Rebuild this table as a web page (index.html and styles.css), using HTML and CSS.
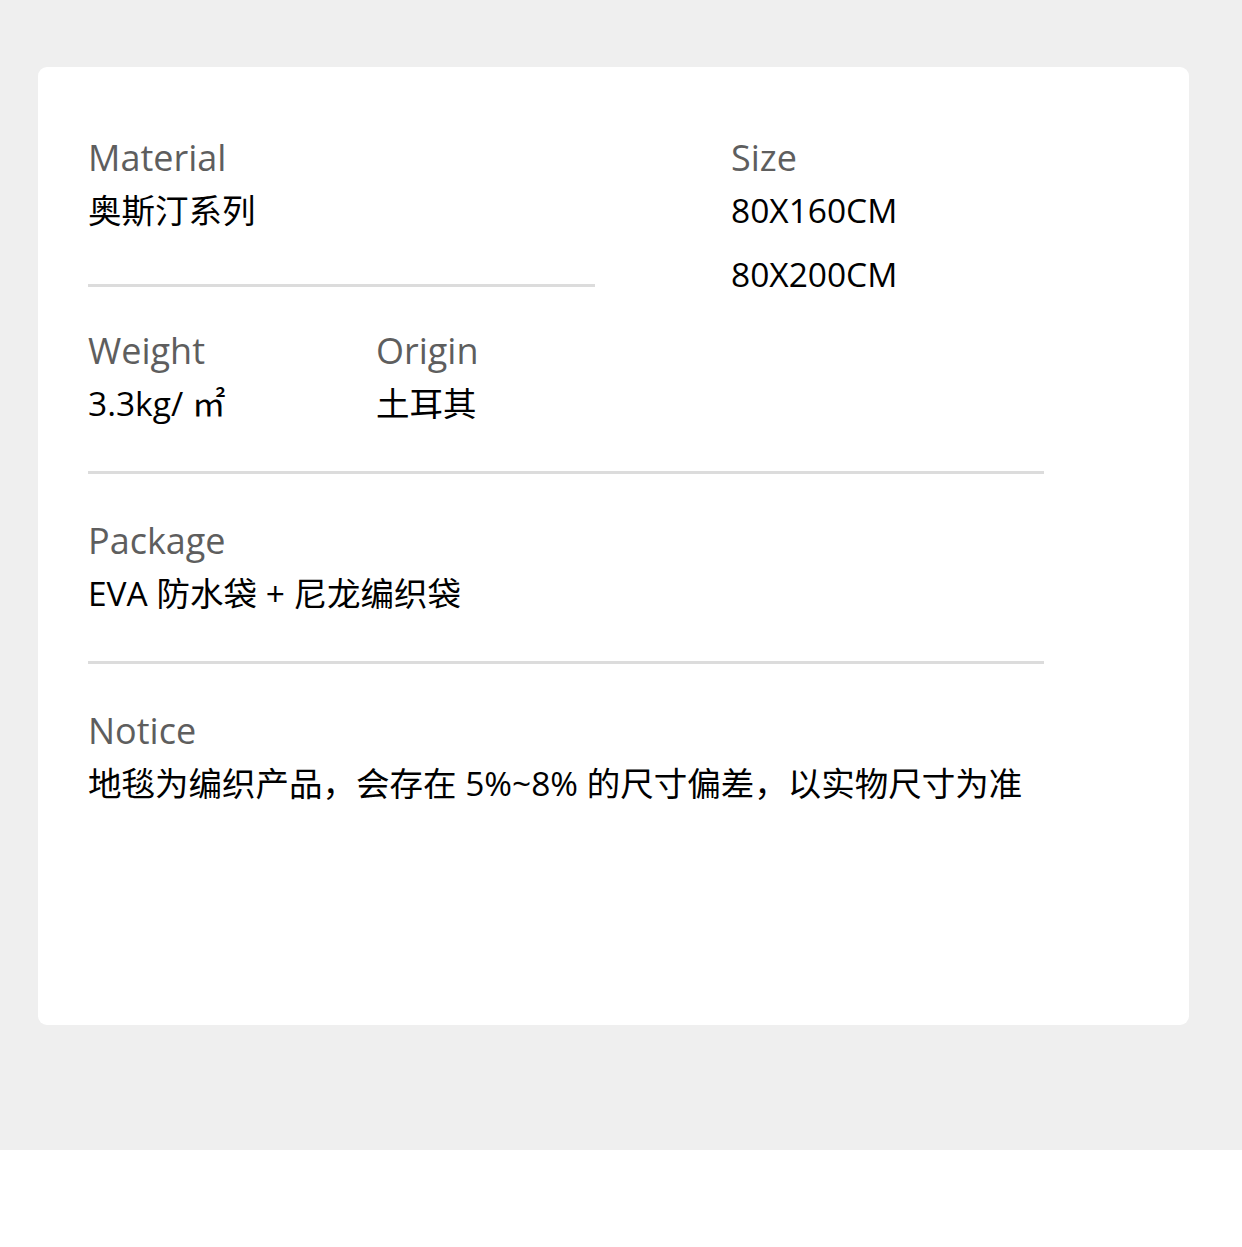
FILE: index.html
```html
<!DOCTYPE html>
<html lang="zh-CN">

<head>
    <meta charset="UTF-8">
    <meta name="viewport" content="width=device-width, initial-scale=1.0">
    <title>产品参数</title>
    <link rel="stylesheet" href="styles.css">
</head>

<body>

    <div class="page">
        <div class="spec-card">

            <div class="row row-top">
                <div class="spec-item spec-material">
                    <div class="spec-label">Material</div>
                    <div class="spec-value">奥斯汀系列</div>
                </div>
                <div class="spec-item">
                    <div class="spec-label">Size</div>
                    <div class="spec-value">80X160CM</div>
                    <div class="spec-value">80X200CM</div>
                </div>
            </div>

            <div class="row row-split">
                <div class="spec-item spec-weight">
                    <div class="spec-label">Weight</div>
                    <div class="spec-value">3.3kg/ ㎡</div>
                </div>
                <div class="spec-item">
                    <div class="spec-label">Origin</div>
                    <div class="spec-value">土耳其</div>
                </div>
            </div>

            <div class="row row-package">
                <div class="spec-item">
                    <div class="spec-label">Package</div>
                    <div class="spec-value">EVA 防水袋 + 尼龙编织袋</div>
                </div>
            </div>

            <div class="row row-last">
                <div class="spec-item">
                    <div class="spec-label">Notice</div>
                    <div class="spec-value">地毯为编织产品，会存在 5%~8% 的尺寸偏差，以实物尺寸为准</div>
                </div>
            </div>

        </div>
    </div>

</body>

</html>
```

FILE: styles.css
```css
body {
    margin: 0;
    background-color: #fff;
    font-family: 'Open Sans', 'Noto Sans CJK SC', sans-serif;
}

.page {
    background-color: #efefef;
    padding: 67px 53px 125px 38px;
}

.spec-card {
    background-color: #fff;
    border-radius: 9px;
    padding: 71px 145px 210px 50px;
}

.row {
    display: flex;
}

.row-top {
    align-items: flex-start;
}

.row-split,
.row-package {
    padding: 25px 0 36px;
    border-bottom: 3px solid #dcdcdc;
}

.row-package {
    padding-top: 47px;
}

.row-last {
    padding-top: 47px;
}

.spec-material {
    width: 507px;
    margin-right: 136px;
    padding-bottom: 42px;
    border-bottom: 3px solid #dcdcdc;
}

.spec-weight {
    width: 288px;
}

.spec-label {
    font-size: 36px;
    line-height: 40px;
    color: #5e5e5e;
}

.spec-value {
    font-size: 33.5px;
    line-height: 64px;
    color: #000;
}
```
